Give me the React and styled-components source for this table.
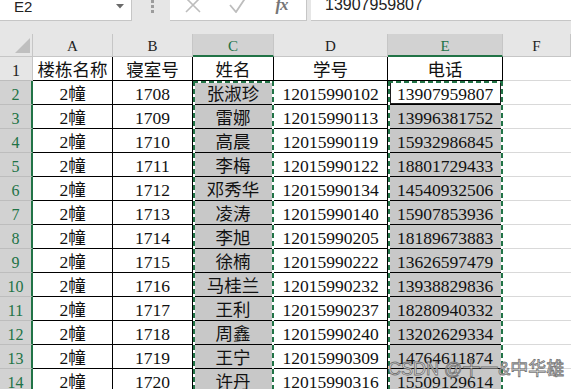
import React from 'react';
import styled, { createGlobalStyle } from 'styled-components';

const GREEN = '#217346';

const rows = [
  ['1708', '张淑珍', '12015990102', '13907959807'],
  ['1709', '雷娜', '12015990113', '13996381752'],
  ['1710', '高晨', '12015990119', '15932986845'],
  ['1711', '李梅', '12015990122', '18801729433'],
  ['1712', '邓秀华', '12015990134', '14540932506'],
  ['1713', '凌涛', '12015990140', '15907853936'],
  ['1714', '李旭', '12015990205', '18189673883'],
  ['1715', '徐楠', '12015990222', '13626597479'],
  ['1716', '马桂兰', '12015990232', '13938829836'],
  ['1717', '王利', '12015990237', '18280940332'],
  ['1718', '周鑫', '12015990240', '13202629334'],
  ['1719', '王宁', '12015990309', '14764611874'],
  ['1720', '许丹', '12015990316', '15509129614'],
];

const columns = ['A', 'B', 'C', 'D', 'E', 'F'];
const activeColumns = ['C', 'E'];

const GlobalStyle = createGlobalStyle`
  html, body {
    margin: 0;
    padding: 0;
    background: #fff;
    overflow: hidden;
  }
  body {
    width: 571px;
    height: 389px;
    font-family: 'Liberation Serif', 'Noto Sans CJK SC', serif;
  }
`;

const Page = styled.div`
  position: relative;
  width: 571px;
  height: 389px;
  overflow: hidden;
`;

const Toolbar = styled.div`
  display: flex;
  height: 21px;
  padding-bottom: 13px;
  background: #e6e6e6;
`;

const NameBox = styled.div`
  box-sizing: border-box;
  width: 132px;
  display: flex;
  justify-content: space-between;
  align-items: flex-start;
  padding: 0 7px 0 14px;
  background: #fff;
  border-right: 1px solid #c6c6c6;
  border-bottom: 1px solid #c6c6c6;
  font: 15px/16px 'Liberation Sans', Arial, sans-serif;
  color: #222;

  span {
    margin-top: -1px;
  }

  svg {
    margin-top: 4px;
  }
`;

const Grip = styled.div`
  width: 38px;
  display: flex;
  flex-direction: column;
  align-items: center;
  gap: 2px;
  padding-left: 2px;
  box-sizing: border-box;
`;

const GripDot = styled.i`
  display: block;
  width: 3px;
  height: 3px;
  background: #9c9c9c;
`;

const FxBox = styled.div`
  box-sizing: border-box;
  width: 137px;
  display: flex;
  background: #fff;
  border-right: 1px solid #c6c6c6;
  border-bottom: 1px solid #c6c6c6;
`;

const IconSlot = styled.div`
  width: 45px;
  display: flex;
  justify-content: center;
  align-items: flex-start;

  svg {
    margin-top: -3px;
  }
`;

const FxLabel = styled.span`
  margin-top: -4px;
  margin-left: -2px;
  font: italic bold 17px/18px 'Liberation Serif', serif;
  color: #767676;
  letter-spacing: -1px;
`;

const FormulaInput = styled.div`
  flex: 1;
  margin-left: 4px;
  padding-left: 14px;
  background: #fff;
  border-bottom: 1px solid #c6c6c6;
  font: 16px/18px 'Liberation Sans', Arial, sans-serif;
  color: #222;
  overflow: hidden;

  span {
    display: block;
    margin-top: -4px;
  }
`;

const Sheet = styled.div`
  display: grid;
  grid-template-columns: 33px 80px 80px 81px 114px 115px 1fr;
  grid-template-rows: 23px repeat(14, 24px);
`;

const Corner = styled.div`
  box-sizing: border-box;
  display: flex;
  justify-content: flex-end;
  align-items: flex-end;
  padding: 0 2px 3px 0;
  background: #e6e6e6;
  border-right: 1px solid #c6c6c6;
  border-bottom: 1px solid #c6c6c6;
`;

const ColHead = styled.div`
  box-sizing: border-box;
  padding-top: 2px;
  text-align: center;
  font-size: 15px;
  line-height: 20px;
  background: ${({ $active }) => ($active ? '#d2d2d2' : '#e6e6e6')};
  color: ${({ $active }) => ($active ? GREEN : '#222')};
  border-right: 1px solid #c6c6c6;
  border-bottom: ${({ $active }) => ($active ? `2px solid ${GREEN}` : '1px solid #c6c6c6')};
`;

const RowHead = styled.div`
  box-sizing: border-box;
  padding-top: 4px;
  text-align: center;
  font-size: 16px;
  line-height: 20px;
  background: ${({ $active }) => ($active ? '#d2d2d2' : '#e6e6e6')};
  color: ${({ $active }) => ($active ? GREEN : '#222')};
  border-right: ${({ $active }) => ($active ? `2px solid ${GREEN}` : '1px solid #c6c6c6')};
  border-bottom: 1px solid #bdbdbd;
`;

const ants = (dir) =>
  `repeating-linear-gradient(${dir}, ${GREEN} 0 5px, #fff 5px 8px)`;

const Cell = styled.div`
  position: relative;
  box-sizing: border-box;
  padding-top: 3px;
  text-align: center;
  font-size: 17.5px;
  line-height: 21px;
  color: #111;
  white-space: nowrap;
  background: ${({ $fill }) => ($fill ? '#c8c8c8' : '#fff')};
  border-right: 1px solid #000;
  border-bottom: 1px solid #000;

  ${({ $ants, $top }) =>
    $ants &&
    `
    &::after {
      content: '';
      position: absolute;
      top: 0;
      left: 0;
      right: -1px;
      bottom: -1px;
      pointer-events: none;
      background:
        ${ants('180deg')} left top / 2px 100% no-repeat,
        ${ants('180deg')} right top / 2px 100% no-repeat
        ${$top ? `, ${ants('90deg')} left top / 100% 2px no-repeat` : ''};
    }
  `}

  ${({ $current }) =>
    $current &&
    `
    &::before {
      content: '';
      position: absolute;
      top: 0;
      left: 2px;
      right: 1px;
      bottom: 0;
      border: 1px solid #1e1e1e;
      pointer-events: none;
    }
  `}
`;

const EmptyCell = styled.div`
  border-bottom: 1px solid #d9d9d9;
`;

const Watermark = styled.div`
  position: absolute;
  left: 388px;
  top: 358px;
  font: 18px/22px 'Liberation Sans', 'Noto Sans CJK SC', sans-serif;
  color: rgba(255, 255, 255, 0.75);
  -webkit-text-stroke: 0.9px rgba(95, 95, 95, 0.85);
  white-space: nowrap;
  pointer-events: none;
`;

function App() {
  return (
    <Page>
      <GlobalStyle />
      <Toolbar>
        <NameBox>
          <span>E2</span>
          <svg width="8" height="5" viewBox="0 0 8 5">
            <path d="M0 0h8L4 4.5z" fill="#6a6a6a" />
          </svg>
        </NameBox>
        <Grip>
          <GripDot />
          <GripDot />
          <GripDot />
        </Grip>
        <FxBox>
          <IconSlot>
            <svg width="16" height="16" viewBox="0 0 16 16">
              <path d="M1 1l14 14M15 1L1 15" stroke="#bdbdbd" strokeWidth="1.6" fill="none" />
            </svg>
          </IconSlot>
          <IconSlot>
            <svg width="18" height="16" viewBox="0 0 18 16">
              <path d="M1 8l6 7L17 0" stroke="#bdbdbd" strokeWidth="1.8" fill="none" />
            </svg>
          </IconSlot>
          <IconSlot>
            <FxLabel>fx</FxLabel>
          </IconSlot>
        </FxBox>
        <FormulaInput>
          <span>13907959807</span>
        </FormulaInput>
      </Toolbar>

      <Sheet>
        <Corner>
          <svg width="15" height="15" viewBox="0 0 15 15">
            <path d="M15 0V15H0z" fill="#bfbfbf" />
          </svg>
        </Corner>
        {columns.map((c) => (
          <ColHead key={c} $active={activeColumns.includes(c)}>
            {c}
          </ColHead>
        ))}

        <RowHead>1</RowHead>
        <Cell>楼栋名称</Cell>
        <Cell>寝室号</Cell>
        <Cell>姓名</Cell>
        <Cell>学号</Cell>
        <Cell>电话</Cell>
        <EmptyCell />

        {rows.map(([room, name, id, phone], i) => (
          <React.Fragment key={room}>
            <RowHead $active>{i + 2}</RowHead>
            <Cell>2幢</Cell>
            <Cell>{room}</Cell>
            <Cell $fill $ants $top={i === 0}>
              {name}
            </Cell>
            <Cell>{id}</Cell>
            <Cell $fill={i > 0} $ants $top={i === 0} $current={i === 0}>
              {phone}
            </Cell>
            <EmptyCell />
          </React.Fragment>
        ))}
      </Sheet>

      <Watermark>CSDN @十一&amp;中华雄</Watermark>
    </Page>
  );
}

export default App;
